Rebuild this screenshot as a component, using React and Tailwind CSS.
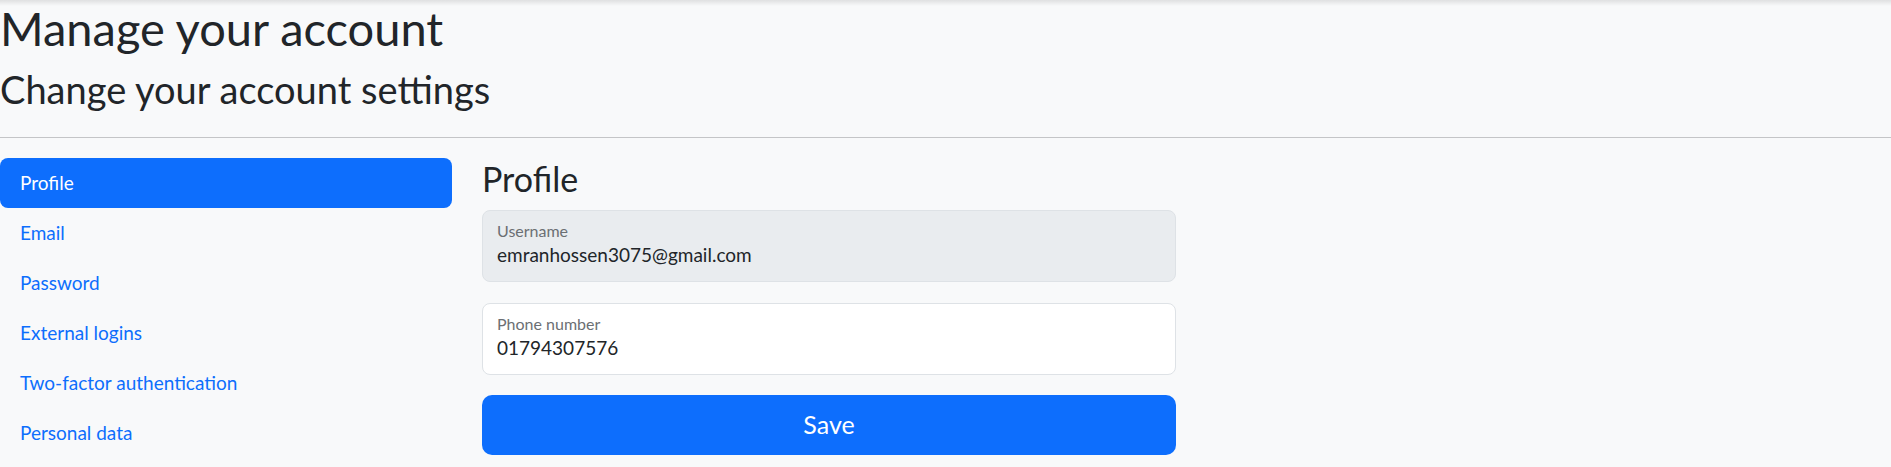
import { useState } from "react";

const NAV = [
  { id: "profile", label: "Profile" },
  { id: "email", label: "Email" },
  { id: "password", label: "Password" },
  { id: "external", label: "External logins" },
  { id: "2fa", label: "Two-factor authentication" },
  { id: "personal", label: "Personal data" },
];

export default function App() {
  const [active, setActive] = useState("profile");
  const [phone, setPhone] = useState("01794307576");

  return (
    <div
      className="relative min-h-[467px] overflow-hidden bg-[#f8f9fa] text-[#212529]"
      style={{ fontFamily: "Lato, 'Noto Sans', sans-serif" }}
    >
      {/* navbar shadow from above */}
      <div className="pointer-events-none absolute inset-x-0 top-0 h-[6px] bg-gradient-to-b from-black/10 to-transparent" />

      <h1 className="-mt-[2px] text-[47px] font-normal leading-[60px]">Manage your account</h1>
      <h2 className="mt-[8px] text-[38px] font-normal leading-[46px]">Change your account settings</h2>
      <hr className="mt-[25px] border-0 border-t border-[#c4c5c7]" />

      <div className="mt-[20px] flex gap-[30px]">
        {/* Side nav */}
        <nav className="flex w-[452px] flex-col">
          {NAV.map((item) => (
            <a
              key={item.id}
              href="#"
              onClick={(e) => {
                e.preventDefault();
                setActive(item.id);
              }}
              className={`flex h-[50px] items-center rounded-[8px] px-[20px] text-[19px] ${
                active === item.id ? "bg-[#0d6efd] text-white" : "text-[#0d6efd]"
              }`}
            >
              {item.label}
            </a>
          ))}
        </nav>

        {/* Form */}
        <div className="w-[694px]">
          <h3 className="text-[34px] font-normal leading-[42px]">Profile</h3>
          <div className="mt-[10px] flex h-[72px] flex-col rounded-[8px] border border-[#dee2e6] bg-[#e9ecef] px-[14px] pt-[10px]">
            <span className="text-[16px] leading-[20px] text-[#6b6f73]">Username</span>
            <span className="text-[19px] leading-[27px]">emranhossen3075@gmail.com</span>
          </div>
          <div className="mt-[21px] flex h-[72px] flex-col rounded-[8px] border border-[#dee2e6] bg-white px-[14px] pt-[10px]">
            <label className="text-[16px] leading-[20px] text-[#6b6f73]">Phone number</label>
            <input
              value={phone}
              onChange={(e) => setPhone(e.target.value)}
              className="bg-transparent text-[19px] leading-[27px] outline-none"
            />
          </div>
          <button className="mt-[20px] h-[60px] w-full rounded-[10px] bg-[#0d6efd] text-[25px] text-white">
            Save
          </button>
        </div>
      </div>
    </div>
  );
}
